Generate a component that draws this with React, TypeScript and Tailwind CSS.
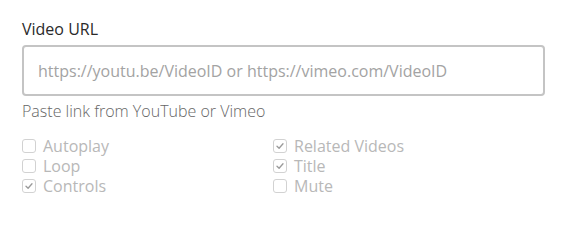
import React, { useState } from 'react';

type Opt = { key: string; label: string };

const leftOpts: Opt[] = [
  { key: 'autoplay', label: 'Autoplay' },
  { key: 'loop', label: 'Loop' },
  { key: 'controls', label: 'Controls' },
];

const rightOpts: Opt[] = [
  { key: 'related', label: 'Related Videos' },
  { key: 'title', label: 'Title' },
  { key: 'mute', label: 'Mute' },
];

const Check = ({ checked, label }: { checked: boolean; label: string }) => (
  <label className="flex items-center h-5 gap-[7px] text-[16px] text-[#b8b8b8]">
    <span className="w-[14px] h-[14px] rounded-[3px] border border-[#d2d2d2] bg-white flex items-center justify-center">
      {checked && (
        <svg width="10" height="10" viewBox="0 0 10 10" fill="none">
          <path d="M2 5.2 L4.1 7.3 L8 2.8" stroke="#9a9a9a" strokeWidth="1.3" strokeLinecap="round" strokeLinejoin="round" />
        </svg>
      )}
    </span>
    {label}
  </label>
);

const App = () => {
  const [url, setUrl] = useState('');
  const checked: Record<string, boolean> = {
    autoplay: false,
    loop: false,
    controls: true,
    related: true,
    title: true,
    mute: false,
  };

  return (
    <div className="w-[566px] h-[211px] bg-white pl-[22px] pr-[21px] pt-[19px]" style={{ fontFamily: '"Open Sans", sans-serif' }}>
      <div className="text-[16px] leading-5 text-[#2a2a2a]">Video URL</div>
      <input
        type="text"
        value={url}
        onChange={(e) => setUrl(e.target.value)}
        placeholder="https://youtu.be/VideoID or https://vimeo.com/VideoID"
        className="mt-[6px] w-full h-[51px] border-2 border-[#c4c4c4] rounded-[4px] px-[14px] text-[16px] text-[#333] placeholder:text-[#a3a3a3] outline-none"
      />
      <div className="mt-[5px] text-[16px] leading-5 font-light text-[#666]">Paste link from YouTube or Vimeo</div>
      <div className="mt-[15px] grid grid-cols-[251px_1fr]">
        <div className="flex flex-col">
          {leftOpts.map((o) => (
            <Check key={o.key} checked={checked[o.key]} label={o.label} />
          ))}
        </div>
        <div className="flex flex-col">
          {rightOpts.map((o) => (
            <Check key={o.key} checked={checked[o.key]} label={o.label} />
          ))}
        </div>
      </div>
    </div>
  );
};

export default App;
